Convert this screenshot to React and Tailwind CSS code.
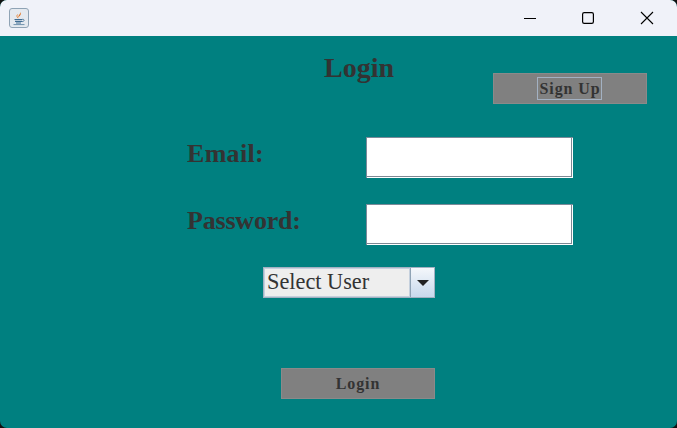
const serif = "font-['Liberation_Serif',serif]";

function JavaIcon() {
  return (
    <div className="ml-[9px] flex h-[20px] w-[20px] items-center justify-center rounded-[3px] border border-[#8fa3b5] bg-[#e4e9ef]">
      <svg width="14" height="15" viewBox="0 0 14 15" fill="none">
        <path d="M8 0.5C9.5 3 5.5 4 6.5 7C6.8 4.8 10.5 4 8 0.5Z" fill="#e2711d" />
        <path d="M5.6 3.5C4.4 5 5 6 6 7.2" stroke="#e8873a" strokeWidth="1" />
        <path d="M2.5 8.5H10.5M3 10.3H10M4 12H9" stroke="#3f6c92" strokeWidth="1.2" />
        <path d="M10.5 8.2C12.8 8 12.6 10.8 10 10.6" stroke="#3f6c92" strokeWidth="0.8" />
        <path d="M1.5 13.6H12.5" stroke="#6f91ad" strokeWidth="1" />
      </svg>
    </div>
  );
}

function TitleBar() {
  return (
    <div className="flex h-[36px] items-center bg-[#f0f2f9]">
      <JavaIcon />
      <div className="ml-auto mr-[23px] flex items-center gap-[44px] text-black">
        <svg width="14" height="14" viewBox="0 0 14 14" fill="none" stroke="currentColor">
          <path d="M1 7.5H13" />
        </svg>
        <svg width="14" height="14" viewBox="0 0 14 14" fill="none" stroke="currentColor" strokeWidth="1.2">
          <rect x="1.6" y="1.6" width="10.8" height="10.8" rx="1.6" />
        </svg>
        <svg className="ml-[1px]" width="14" height="14" viewBox="0 0 14 14" fill="none" stroke="currentColor" strokeWidth="1.1">
          <path d="M1 1L13 13M13 1L1 13" />
        </svg>
      </div>
    </div>
  );
}

function Field({ label, labelClass, className }) {
  return (
    <div className={`flex items-start ${className}`}>
      <span className={`mt-[2px] w-[179px] text-[26px] font-bold leading-[30px] text-[#333333] ${labelClass}`}>{label}</span>
      <div className="h-[41px] w-[207px] border-t border-l border-[#7a8a99] bg-white shadow-[inset_-1px_-1px_0_#ffffff,inset_-2px_-2px_0_#7d8893]" />
    </div>
  );
}

export default function App() {
  return (
    <div className="h-[428px] w-[677px] overflow-hidden bg-[#111111]">
      <div className={`h-[428px] w-[677px] overflow-hidden rounded-[7px] bg-[#008080] ${serif}`}>
        <TitleBar />
        <div className="flex flex-col pl-[187px]">
          <div className="flex items-start">
            <h1 className="ml-[137px] mt-[16px] text-[28px] font-bold leading-[32px] text-[#333333]">Login</h1>
            <div className="ml-[99px] mt-[37px] flex h-[31px] w-[154px] items-center justify-center border border-[#8a8a8a] bg-[#808080] pr-[2px]">
              <span className="border border-[#a3b1c2] pl-[2px] text-[16px] font-bold leading-[21px] tracking-[0.9px] text-[#333333]">Sign Up</span>
            </div>
          </div>
          <Field label="Email:" labelClass="tracking-[0.3px]" className="mt-[33px]" />
          <Field label="Password:" labelClass="tracking-[-0.2px]" className="mt-[26px]" />
          <div className="ml-[76px] mt-[22px] flex h-[31px] w-[172px] items-stretch border border-[#a3b1c2] bg-[#eeeeee]">
            <div className="flex flex-1 items-center border border-[#c5d0dd] pb-[1px] pl-[2px] text-[22.3px] leading-none text-[#333333]">Select User</div>
            <div className="flex w-[24px] items-center justify-center border-l border-[#8fa3b5] bg-gradient-to-b from-[#f4f7fb] to-[#c8d9ec]">
              <div className="h-0 w-0 border-x-[6px] border-t-[6px] border-x-transparent border-t-[#222222]" />
            </div>
          </div>
          <div className="ml-[94px] mt-[70px] flex h-[31px] w-[154px] items-center justify-center border border-[#8a8a8a] bg-[#808080]">
            <span className="text-[16px] font-bold tracking-[0.9px] text-[#333333]">Login</span>
          </div>
        </div>
      </div>
    </div>
  );
}
